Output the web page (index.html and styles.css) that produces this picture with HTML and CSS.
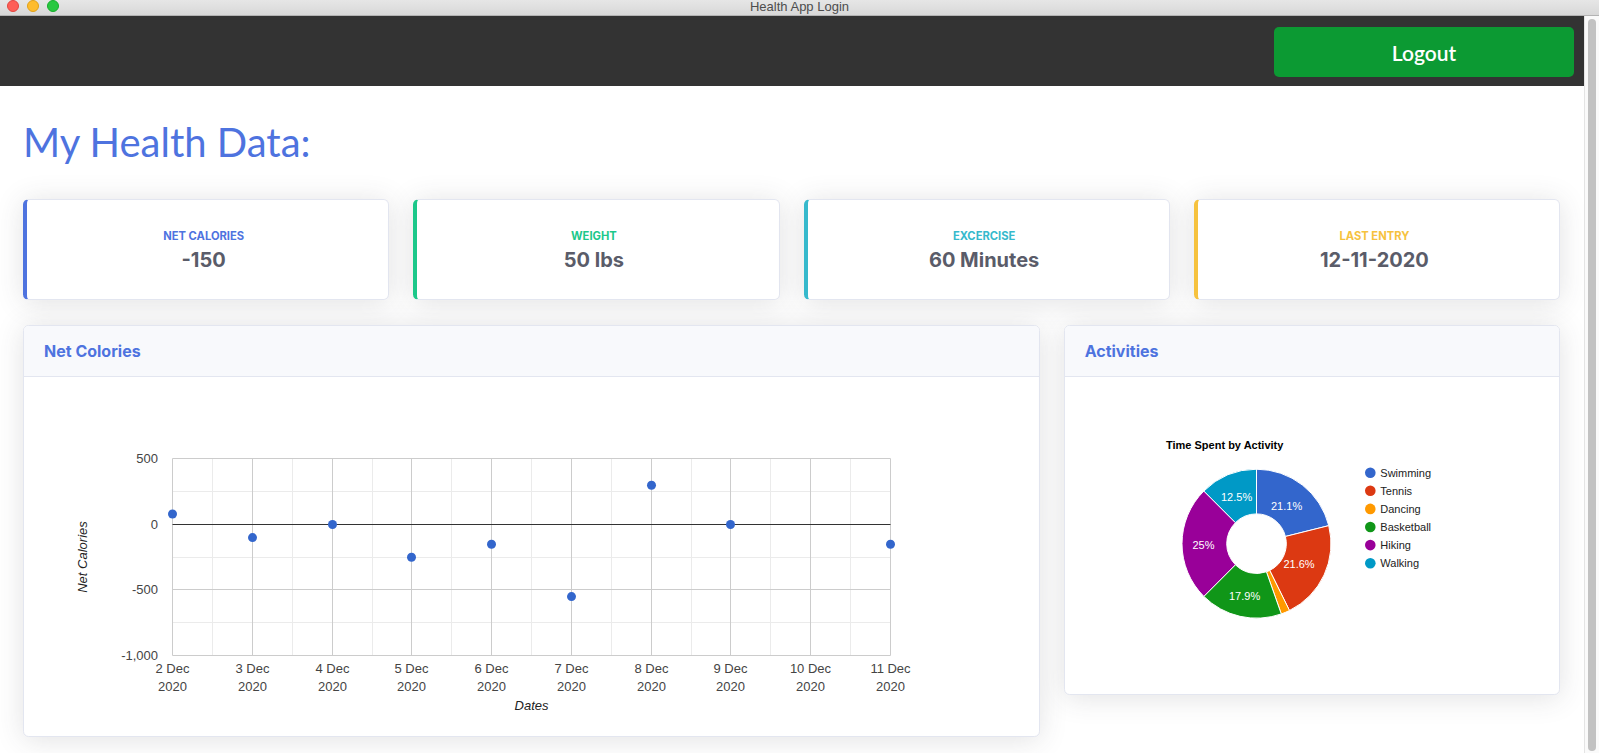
FILE: index.html
```html
<!DOCTYPE html>
<html lang="en">
<head>
<meta charset="utf-8">
<title>Health App Login</title>
<link rel="stylesheet" href="styles.css">
</head>
<body>
<div class="window">
  <div class="titlebar">
    <div class="lights">
      <span class="light red"></span>
      <span class="light yellow"></span>
      <span class="light green"></span>
    </div>
    <div class="wintitle">Health App Login</div>
    <div></div>
  </div>
  <div class="viewport">
    <div class="page">
      <nav class="topbar">
        <button class="logout">Logout</button>
      </nav>
      <main class="content">
        <h1 class="page-title">My Health Data:</h1>

        <div class="row stats">
          <div class="col-3">
            <div class="stat stat-blue">
              <div class="stat-label">Net Calories</div>
              <div class="stat-value">-150</div>
            </div>
          </div>
          <div class="col-3">
            <div class="stat stat-green">
              <div class="stat-label">Weight</div>
              <div class="stat-value">50 lbs</div>
            </div>
          </div>
          <div class="col-3">
            <div class="stat stat-teal">
              <div class="stat-label">Excercise</div>
              <div class="stat-value">60 Minutes</div>
            </div>
          </div>
          <div class="col-3">
            <div class="stat stat-yellow">
              <div class="stat-label">Last Entry</div>
              <div class="stat-value">12-11-2020</div>
            </div>
          </div>
        </div>

        <div class="row charts">
          <div class="col-8">
            <div class="card">
              <div class="card-header"><h6 class="card-title">Net Colories</h6></div>
              <div class="card-body">
                <svg class="gchart line-chart" xmlns="http://www.w3.org/2000/svg">
                  <g class="grid-minor">
                    <line x1="168.5" y1="61.5" x2="168.5" y2="258.5"/>
                    <line x1="248.5" y1="61.5" x2="248.5" y2="258.5"/>
                    <line x1="328.5" y1="61.5" x2="328.5" y2="258.5"/>
                    <line x1="407.5" y1="61.5" x2="407.5" y2="258.5"/>
                    <line x1="487.5" y1="61.5" x2="487.5" y2="258.5"/>
                    <line x1="567.5" y1="61.5" x2="567.5" y2="258.5"/>
                    <line x1="647.5" y1="61.5" x2="647.5" y2="258.5"/>
                    <line x1="726.5" y1="61.5" x2="726.5" y2="258.5"/>
                    <line x1="806.5" y1="61.5" x2="806.5" y2="258.5"/>
                    <line x1="128.5" y1="94.5" x2="846.5" y2="94.5"/>
                    <line x1="128.5" y1="160.5" x2="846.5" y2="160.5"/>
                    <line x1="128.5" y1="225.5" x2="846.5" y2="225.5"/>
                  </g>
                  <g class="grid-major">
                    <line x1="128.5" y1="61.5" x2="128.5" y2="258.5"/>
                    <line x1="208.5" y1="61.5" x2="208.5" y2="258.5"/>
                    <line x1="288.5" y1="61.5" x2="288.5" y2="258.5"/>
                    <line x1="367.5" y1="61.5" x2="367.5" y2="258.5"/>
                    <line x1="447.5" y1="61.5" x2="447.5" y2="258.5"/>
                    <line x1="527.5" y1="61.5" x2="527.5" y2="258.5"/>
                    <line x1="607.5" y1="61.5" x2="607.5" y2="258.5"/>
                    <line x1="686.5" y1="61.5" x2="686.5" y2="258.5"/>
                    <line x1="766.5" y1="61.5" x2="766.5" y2="258.5"/>
                    <line x1="846.5" y1="61.5" x2="846.5" y2="258.5"/>
                    <line x1="128.5" y1="61.5" x2="846.5" y2="61.5"/>
                    <line x1="128.5" y1="192.5" x2="846.5" y2="192.5"/>
                    <line x1="128.5" y1="258.5" x2="846.5" y2="258.5"/>
                  </g>
                  <line class="zero-line" x1="128.5" y1="127.5" x2="846.5" y2="127.5"/>

                  <g class="tick tick-y">
                    <text x="114" y="66">500</text>
                    <text x="114" y="132">0</text>
                    <text x="114" y="197">-500</text>
                    <text x="114" y="263">-1,000</text>
                  </g>
                  <g class="tick tick-x">
                    <text x="128.5" y="276">2 Dec</text><text x="128.5" y="294">2020</text>
                    <text x="208.5" y="276">3 Dec</text><text x="208.5" y="294">2020</text>
                    <text x="288.5" y="276">4 Dec</text><text x="288.5" y="294">2020</text>
                    <text x="367.5" y="276">5 Dec</text><text x="367.5" y="294">2020</text>
                    <text x="447.5" y="276">6 Dec</text><text x="447.5" y="294">2020</text>
                    <text x="527.5" y="276">7 Dec</text><text x="527.5" y="294">2020</text>
                    <text x="607.5" y="276">8 Dec</text><text x="607.5" y="294">2020</text>
                    <text x="686.5" y="276">9 Dec</text><text x="686.5" y="294">2020</text>
                    <text x="766.5" y="276">10 Dec</text><text x="766.5" y="294">2020</text>
                    <text x="846.5" y="276">11 Dec</text><text x="846.5" y="294">2020</text>
                  </g>
                  <text class="axis-title axis-x" x="487.5" y="313">Dates</text>
                  <text class="axis-title axis-y" transform="translate(42.5,160) rotate(-90)">Net Calories</text>

                  <g class="points">
                    <circle cx="128.5" cy="117" r="4.5"/>
                    <circle cx="208.5" cy="140.6" r="4.5"/>
                    <circle cx="288.5" cy="127.5" r="4.5"/>
                    <circle cx="367.5" cy="160.3" r="4.5"/>
                    <circle cx="447.5" cy="147.2" r="4.5"/>
                    <circle cx="527.5" cy="199.6" r="4.5"/>
                    <circle cx="607.5" cy="88.2" r="4.5"/>
                    <circle cx="686.5" cy="127.5" r="4.5"/>
                    <circle cx="846.5" cy="147.2" r="4.5"/>
                  </g>
                </svg>
              </div>
            </div>
          </div>
          <div class="col-4">
            <div class="card">
              <div class="card-header"><h6 class="card-title">Activities</h6></div>
              <div class="card-body">
                <svg class="gchart pie-chart" xmlns="http://www.w3.org/2000/svg">
                  <text class="pie-title" x="81" y="51.5">Time Spent by Activity</text>
                  <g class="slices">
                    <path class="s-swim" d="M171.5,72.2 A74.5,74.5 0 0 1 243.77,128.63 L200.41,139.47 A29.8,29.8 0 0 0 171.5,116.9 Z"/>
                    <path class="s-tennis" d="M243.77,128.63 A74.5,74.5 0 0 1 204.49,213.5 L184.7,173.42 A29.8,29.8 0 0 0 200.41,139.47 Z"/>
                    <path class="s-dance" d="M204.49,213.5 A74.5,74.5 0 0 1 196.29,216.95 L181.42,174.8 A29.8,29.8 0 0 0 184.7,173.42 Z"/>
                    <path class="s-basket" d="M196.29,216.95 A74.5,74.5 0 0 1 118.82,199.38 L150.43,167.77 A29.8,29.8 0 0 0 181.42,174.8 Z"/>
                    <path class="s-hike" d="M118.82,199.38 A74.5,74.5 0 0 1 118.82,94.02 L150.43,125.63 A29.8,29.8 0 0 0 150.43,167.77 Z"/>
                    <path class="s-walk" d="M118.82,94.02 A74.5,74.5 0 0 1 171.5,72.2 L171.5,116.9 A29.8,29.8 0 0 0 150.43,125.63 Z"/>
                  </g>
                  <g class="slice-labels">
                    <text x="201.6" y="113">21.1%</text>
                    <text x="151.6" y="103.7">12.5%</text>
                    <text x="118.5" y="152">25%</text>
                    <text x="214" y="171.3">21.6%</text>
                    <text x="159.6" y="202.7">17.9%</text>
                  </g>
                  <g class="legend">
                    <circle class="s-swim" cx="285.3" cy="75.7" r="5.3"/>
                    <text x="295.3" y="79.7">Swimming</text>
                    <circle class="s-tennis" cx="285.3" cy="93.8" r="5.3"/>
                    <text x="295.3" y="97.8">Tennis</text>
                    <circle class="s-dance" cx="285.3" cy="111.9" r="5.3"/>
                    <text x="295.3" y="115.9">Dancing</text>
                    <circle class="s-basket" cx="285.3" cy="130" r="5.3"/>
                    <text x="295.3" y="134">Basketball</text>
                    <circle class="s-hike" cx="285.3" cy="148.1" r="5.3"/>
                    <text x="295.3" y="152.1">Hiking</text>
                    <circle class="s-walk" cx="285.3" cy="166.2" r="5.3"/>
                    <text x="295.3" y="170.2">Walking</text>
                  </g>
                </svg>
              </div>
            </div>
          </div>
        </div>
      </main>
    </div>
    <div class="scrollbar"><div class="thumb"></div></div>
  </div>
</div>
</body>
</html>
```
FILE: styles.css
```css
html, body {
  margin: 0;
  padding: 0;
  height: 100%;
  overflow: hidden;
}

body {
  font-family: Inter, "Noto Sans", sans-serif;
  background: #fff;
}

.window {
  display: flex;
  flex-direction: column;
  height: 753px;
}

/* macOS title bar */
.titlebar {
  height: 16px;
  box-sizing: border-box;
  border-bottom: 1px solid #b3b3b3;
  background: linear-gradient(#e6e6e6, #d8d8d8);
  display: grid;
  grid-template-columns: 1fr auto 1fr;
  align-items: start;
}

.lights {
  display: flex;
  gap: 8px;
  padding-left: 7px;
}

.light {
  width: 12px;
  height: 12px;
  border-radius: 50%;
  box-sizing: border-box;
}

.light.red { background: #fe5f57; border: 0.5px solid #e2463f; }
.light.yellow { background: #febc2e; border: 0.5px solid #e1a116; }
.light.green { background: #28c840; border: 0.5px solid #14ae2a; }

.wintitle {
  font: 13px/14px "Liberation Sans", Arial, sans-serif;
  color: #4d4d4d;
}

.viewport {
  flex: 1;
  display: flex;
  min-height: 0;
}

.page {
  flex: 1;
  min-width: 0;
  display: flex;
  flex-direction: column;
}

.scrollbar {
  width: 15px;
  box-sizing: border-box;
  border-left: 1px solid #e4e4e4;
  background: #fafafa;
  padding: 3px 3px 2px 3px;
}

.thumb {
  height: 100%;
  border-radius: 4px;
  background: #c2c2c2;
}

/* top navigation */
.topbar {
  height: 70px;
  box-sizing: border-box;
  background: #333333;
  display: flex;
  justify-content: flex-end;
  align-items: flex-start;
  padding: 11px 10px 0;
}

.logout {
  width: 300px;
  height: 50px;
  border: 0;
  border-radius: 5px;
  background: #0c9a33;
  color: #fff;
  font: 600 21px/1 Lato, "Noto Sans", sans-serif;
  cursor: pointer;
}

/* content */
.content {
  padding: 32px 24px 0 23px;
}

.page-title {
  margin: 0 0 33px;
  font: 400 40px/1.2 Lato, "Noto Sans", sans-serif;
  color: #4e73df;
}

.row {
  display: flex;
  margin: 0 -12px;
}

.col-3, .col-4, .col-8 {
  box-sizing: border-box;
  padding: 0 12px;
}

.col-3 { flex: 0 0 25%; }
.col-4 { flex: 0 0 33.3333%; }
.col-8 { flex: 0 0 66.6667%; }

.stats {
  margin-bottom: 25px;
}

.charts {
  align-items: flex-start;
}

/* stat cards */
.stat {
  height: 101px;
  box-sizing: border-box;
  background: #fff;
  border: 1px solid #e3e6f0;
  border-left-width: 4px;
  border-radius: 5.6px;
  box-shadow: 0 2.4px 28px 0 rgba(58, 59, 69, 0.15);
  display: flex;
  flex-direction: column;
  align-items: center;
  justify-content: center;
  padding: 0 24px 0 16px;
}

.stat-label {
  font: 700 11.2px/16px Inter, sans-serif;
  text-transform: uppercase;
  margin-bottom: 4px;
}

.stat-value {
  font: 700 20px/24px Inter, sans-serif;
  color: #5a5c69;
}

.stat-blue { border-left-color: #4e73df; }
.stat-blue .stat-label { color: #4e73df; }
.stat-green { border-left-color: #1cc88a; }
.stat-green .stat-label { color: #1cc88a; }
.stat-teal { border-left-color: #36b9cc; }
.stat-teal .stat-label { color: #36b9cc; }
.stat-yellow { border-left-color: #f6c23e; }
.stat-yellow .stat-label { color: #f6c23e; }

/* chart cards */
.card {
  background: #fff;
  border: 1px solid #e3e6f0;
  border-radius: 5.6px;
  box-shadow: 0 2.4px 28px 0 rgba(58, 59, 69, 0.15);
  overflow: hidden;
}

.card-header {
  background: #f8f9fc;
  border-bottom: 1px solid #e3e6f0;
  padding: 12px 20px;
}

.card-title {
  margin: 0;
  font: 700 16px/26px Inter, sans-serif;
  color: #4e73df;
}

.card-body {
  padding: 20px;
}

.gchart {
  display: block;
  width: 100%;
}

.gchart text {
  font-family: "Liberation Sans", Arial, sans-serif;
}

.line-chart { height: 319px; }
.pie-chart { height: 277px; }

.grid-minor line { stroke: #ebebeb; stroke-width: 1; }
.grid-major line { stroke: #cccccc; stroke-width: 1; }
.zero-line { stroke: #333333; stroke-width: 1; }

.tick text { font-size: 13px; fill: #444444; }
.tick-y text { text-anchor: end; }
.tick-x text { text-anchor: middle; }

.axis-title {
  font-size: 13px;
  font-style: italic;
  fill: #222222;
  text-anchor: middle;
}

.points circle { fill: #3366cc; }

.pie-title {
  font-size: 11px;
  font-weight: 700;
  fill: #000;
}

.slices path { stroke: #fff; stroke-width: 1; }

.slice-labels text {
  font-size: 11px;
  fill: #fff;
  text-anchor: middle;
}

.legend text {
  font-size: 11px;
  fill: #222222;
}

.s-swim { fill: #3366cc; }
.s-tennis { fill: #dc3912; }
.s-dance { fill: #ff9900; }
.s-basket { fill: #109618; }
.s-hike { fill: #990099; }
.s-walk { fill: #0099c6; }
```
